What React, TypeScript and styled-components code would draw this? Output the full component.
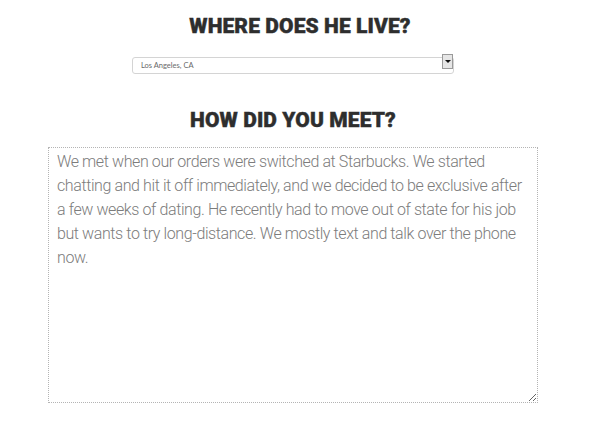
import styled, { createGlobalStyle } from 'styled-components'

const GlobalStyle = createGlobalStyle`
  * {
    box-sizing: border-box;
  }
  body {
    margin: 0;
    background: #ffffff;
    font-family: Roboto, "Liberation Sans", sans-serif;
  }
`

const Page = styled.div`
  width: 600px;
  padding: 13px 0 0;
  display: flex;
  flex-direction: column;
  align-items: center;
`

const Heading = styled.h2`
  margin: 0;
  font-family: Roboto, "Liberation Sans", sans-serif;
  font-weight: 900;
  font-size: 21px;
  line-height: 26px;
  letter-spacing: 0.1px;
  color: #2e2e2e;
  text-transform: uppercase;
  -webkit-text-stroke: 0.4px #2e2e2e;
`

const Section = styled.section`
  display: flex;
  flex-direction: column;
  align-items: center;
  width: 100%;
  padding-right: 14px;
`

const SelectWrap = styled.div`
  position: relative;
  width: 322px;
  height: 17px;
  margin-top: 14px;
`

const Select = styled.select`
  appearance: none;
  width: 100%;
  height: 100%;
  border: 1px solid #d4d4d4;
  border-radius: 3px;
  background: #fff;
  padding: 0 0 0 8px;
  font-family: Lato, "Liberation Sans", sans-serif;
  font-size: 7.5px;
  color: #6a6a6a;
  outline: none;
`

const ArrowBox = styled.span`
  position: absolute;
  top: 1px;
  right: 1px;
  width: 11px;
  height: 15px;
  background: #e6e6e6;
  border: 1px solid #9a9a9a;
  display: flex;
  align-items: center;
  justify-content: center;
  pointer-events: none;
`

const Caret = styled.span`
  width: 0;
  height: 0;
  border-left: 3px solid transparent;
  border-right: 3px solid transparent;
  border-top: 3px solid #111;
`

const MeetHeading = styled(Heading)`
  margin-top: 37px;
`

const Story = styled.textarea`
  margin-top: 14px;
  width: 490px;
  height: 256px;
  border: 1px dotted #b4b4b4;
  padding: 2px 8px;
  font-family: Roboto, "Liberation Sans", sans-serif;
  font-weight: 300;
  font-size: 16px;
  letter-spacing: -0.4px;
  line-height: 24px;
  color: #7c7c7c;
  background: #fff;
  outline: none;
`

const story =
  'We met when our orders were switched at Starbucks. We started chatting and hit it off immediately, and we decided to be exclusive after a few weeks of dating. He recently had to move out of state for his job but wants to try long-distance. We mostly text and talk over the phone now.'

export default function App() {
  return (
    <Page>
      <GlobalStyle />
      <Heading>Where does he live?</Heading>
      <Section>
        <SelectWrap>
          <Select defaultValue="la">
            <option value="la">Los Angeles, CA</option>
          </Select>
          <ArrowBox>
            <Caret />
          </ArrowBox>
        </SelectWrap>
        <MeetHeading>How did you meet?</MeetHeading>
        <Story defaultValue={story} />
      </Section>
    </Page>
  )
}
